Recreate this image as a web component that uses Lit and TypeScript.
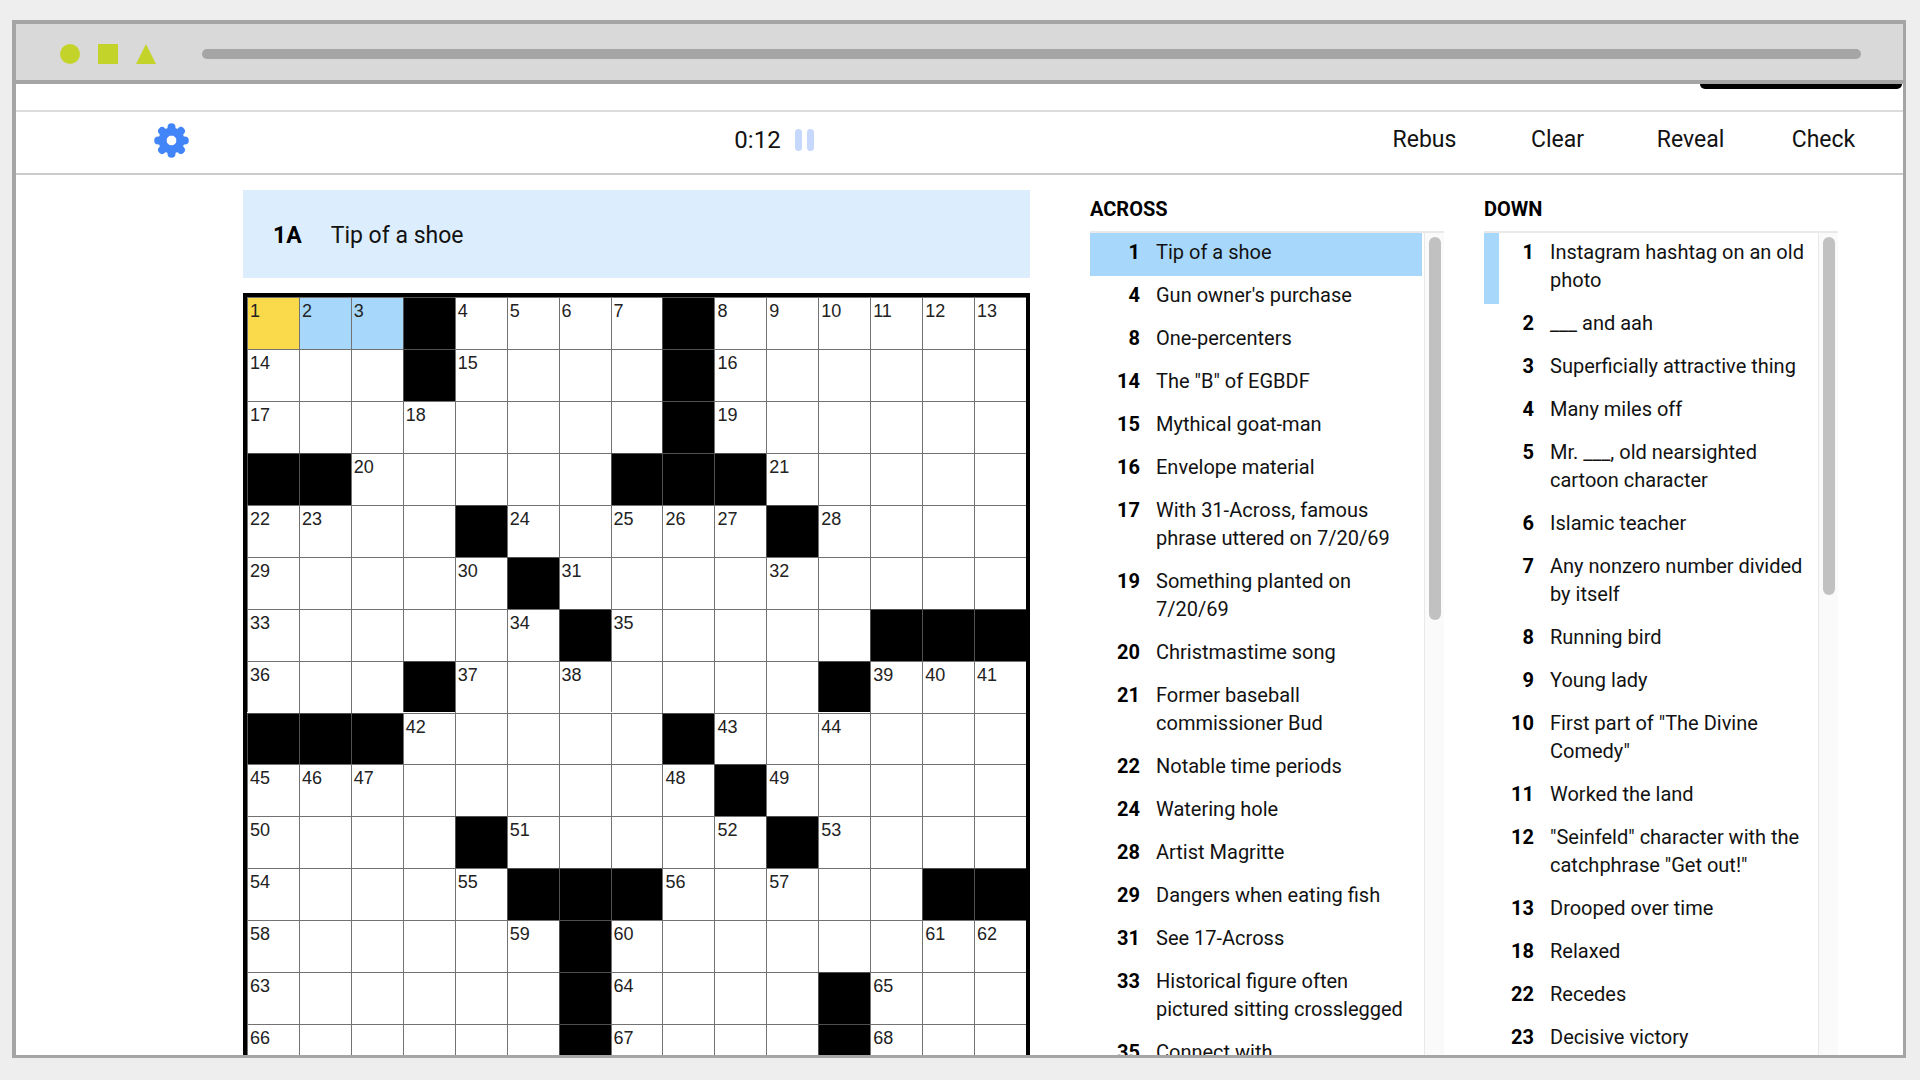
import { LitElement, html, css, svg } from "lit";
import { customElement, property } from "lit/decorators.js";
import { classMap } from "lit/directives/class-map.js";

interface Clue {
  n: number;
  text: string;
}

interface Cell {
  block: boolean;
  n: number;
  row: number;
  col: number;
}

const PATTERN = [
  "...#....#......",
  "...#....#......",
  "........#......",
  "##.....###.....",
  "....#.....#....",
  ".....#.........",
  "......#.....###",
  "...#.......#...",
  "###.....#......",
  ".........#.....",
  "....#.....#....",
  ".....###.....##",
  "......#........",
  "......#....#...",
  "......#....#...",
];

const ACROSS: Clue[] = [
  { n: 1, text: "Tip of a shoe" },
  { n: 4, text: "Gun owner's purchase" },
  { n: 8, text: "One-percenters" },
  { n: 14, text: 'The "B" of EGBDF' },
  { n: 15, text: "Mythical goat-man" },
  { n: 16, text: "Envelope material" },
  { n: 17, text: "With 31-Across, famous phrase uttered on 7/20/69" },
  { n: 19, text: "Something planted on 7/20/69" },
  { n: 20, text: "Christmastime song" },
  { n: 21, text: "Former baseball commissioner Bud" },
  { n: 22, text: "Notable time periods" },
  { n: 24, text: "Watering hole" },
  { n: 28, text: "Artist Magritte" },
  { n: 29, text: "Dangers when eating fish" },
  { n: 31, text: "See 17-Across" },
  { n: 33, text: "Historical figure often pictured sitting crosslegged" },
  { n: 35, text: "Connect with" },
];

const DOWN: Clue[] = [
  { n: 1, text: "Instagram hashtag on an old photo" },
  { n: 2, text: "___ and aah" },
  { n: 3, text: "Superficially attractive thing" },
  { n: 4, text: "Many miles off" },
  { n: 5, text: "Mr. ___, old nearsighted cartoon character" },
  { n: 6, text: "Islamic teacher" },
  { n: 7, text: "Any nonzero number divided by itself" },
  { n: 8, text: "Running bird" },
  { n: 9, text: "Young lady" },
  { n: 10, text: 'First part of "The Divine Comedy"' },
  { n: 11, text: "Worked the land" },
  { n: 12, text: '"Seinfeld" character with the catchphrase "Get out!"' },
  { n: 13, text: "Drooped over time" },
  { n: 18, text: "Relaxed" },
  { n: 22, text: "Recedes" },
  { n: 23, text: "Decisive victory" },
];

/** Numbers every cell that starts an across or a down word. */
function buildCells(pattern: string[]): Cell[] {
  const open = (r: number, c: number) => pattern[r]?.[c] === ".";
  let next = 1;
  return pattern.flatMap((line, row) =>
    [...line].map((ch, col) => {
      const block = ch === "#";
      const startsAcross = !open(row, col - 1) && open(row, col + 1);
      const startsDown = !open(row - 1, col) && open(row + 1, col);
      const n = !block && (startsAcross || startsDown) ? next++ : 0;
      return { block, n, row, col };
    })
  );
}

const CELLS = buildCells(PATTERN);

@customElement("clue-list")
export class ClueList extends LitElement {
  @property() heading = "";
  @property({ attribute: false }) clues: Clue[] = [];
  @property({ type: Number }) selected = 0;
  @property({ type: Number }) related = 0;
  @property({ type: Number }) thumb = 40;

  static styles = css`
    :host {
      display: flex;
      flex-direction: column;
      min-width: 0;
      min-height: 0;
      color: #121212;
    }
    .heading {
      margin: 0;
      padding: 20px 0 8px;
      font-size: 20px;
      line-height: 28px;
      font-weight: 700;
      color: #000;
    }
    .scroller {
      flex: 1;
      min-height: 0;
      display: flex;
      gap: 2px;
      border-top: 2px solid #e9e9e9;
      overflow: hidden;
    }
    .items {
      flex: 1;
      min-width: 0;
      margin: 0;
      padding: 0;
      list-style: none;
    }
    .item {
      display: flex;
      gap: 16px;
      padding: 5px 12px 10px 0;
      border-left: 15px solid transparent;
      font-size: 20px;
      line-height: 28px;
    }
    .selected {
      background: #a7d8fb;
    }
    .selected,
    .related {
      border-left-color: #a7d8fb;
    }
    .num {
      flex: none;
      width: 35px;
      text-align: right;
      font-weight: 700;
      color: #000;
    }
    .track {
      flex: none;
      width: 12px;
      padding: 4px 3px 4px 4px;
      border-left: 1px solid #e8e8e8;
      background: #fafafa;
    }
    .thumb {
      border-radius: 6px;
      background: #c1c1c1;
    }
  `;

  render() {
    return html`
      <h2 class="heading">${this.heading}</h2>
      <div class="scroller">
        <ol class="items">
          ${this.clues.map(
            (c) => html`<li
              class=${classMap({
                item: true,
                selected: c.n === this.selected,
                related: c.n === this.related,
              })}
            >
              <span class="num">${c.n}</span><span>${c.text}</span>
            </li>`
          )}
        </ol>
        <div class="track">
          <div class="thumb" style="height:${this.thumb}%"></div>
        </div>
      </div>
    `;
  }
}

@customElement("puzzle-grid")
export class PuzzleGrid extends LitElement {
  static styles = css`
    :host {
      display: block;
    }
    .grid {
      display: grid;
      grid-template-columns: repeat(15, 1fr);
      border: 4px solid #000;
      background: #fff;
    }
    .cell {
      display: grid;
      aspect-ratio: 1;
      box-sizing: border-box;
      min-width: 0;
      border: 0 solid #727272;
      border-width: 1px 0 0 1px;
      background: #fff;
    }
    .block {
      background: #000;
      border-color: #505050;
    }
    .word {
      background: #a7d8fb;
    }
    .active {
      background: #fada4a;
    }
    .num,
    .letter {
      grid-area: 1 / 1;
    }
    .num {
      padding: 4px 0 0 2px;
      font: 18px/19px "Liberation Sans", Arial, sans-serif;
      color: #222;
    }
    .letter {
      box-sizing: border-box;
      width: 100%;
      min-width: 0;
      height: 100%;
      margin: 0;
      padding: 12px 0 0;
      border: 0;
      outline: 0;
      background: transparent;
      font: 32px "Liberation Sans", Arial, sans-serif;
      text-align: center;
      text-transform: uppercase;
    }
  `;

  render() {
    return html`<div class="grid">
      ${CELLS.map((c) => {
        if (c.block) {
          return html`<div class="cell block"></div>`;
        }
        const active = c.row === 0 && c.col === 0;
        const word = c.row === 0 && (c.col === 1 || c.col === 2);
        return html`<label class=${classMap({ cell: true, active, word })}>
          <span class="num">${c.n || ""}</span>
          <input
            class="letter"
            maxlength="1"
            autocomplete="off"
            aria-label="Row ${c.row + 1}, column ${c.col + 1}"
          />
        </label>`;
      })}
    </div>`;
  }
}

@customElement("app-root")
export class AppRoot extends LitElement {
  static styles = css`
    :host {
      display: block;
      box-sizing: border-box;
      height: 100vh;
      padding: 20px 14px 22px 12px;
      background: #eee;
      font-family: Roboto, "Liberation Sans", sans-serif;
      color: #121212;
    }
    .window {
      display: flex;
      flex-direction: column;
      box-sizing: border-box;
      height: 100%;
      border: solid #a5a5a5;
      border-width: 4px 3px 3px 4px;
      background: #fff;
      overflow: hidden;
    }
    .titlebar {
      flex: none;
      display: flex;
      align-items: center;
      gap: 46px;
      height: 56px;
      padding: 3px 42px 0 44px;
      box-sizing: border-box;
      background: #d9d9d9;
    }
    .shapes {
      flex: none;
      width: 96px;
      height: 20px;
      fill: #c4d32a;
    }
    .address {
      flex: 1;
      height: 10px;
      border-radius: 5px;
      background: #a5a5a5;
    }
    .banner {
      flex: none;
      display: flex;
      justify-content: flex-end;
      height: 26px;
      padding-right: 1px;
      border-top: 4px solid #a5a5a5;
      border-bottom: 2px solid #dcdcdc;
    }
    .tab {
      width: 202px;
      height: 5px;
      border-radius: 0 0 5px 5px;
      background: #000;
    }
    .toolbar {
      flex: none;
      display: grid;
      grid-template-columns: 138fr 1204fr 532fr 13fr;
      align-items: center;
      box-sizing: border-box;
      height: 63px;
      padding-bottom: 4px;
      border-bottom: 2px solid #cbcbcb;
    }
    button {
      margin: 0;
      padding: 0;
      border: 0;
      background: none;
      color: inherit;
      font: inherit;
      cursor: pointer;
    }
    .gear {
      grid-column: 2;
      grid-row: 1;
      justify-self: start;
      display: flex;
    }
    .gear svg {
      width: 35px;
      height: 35px;
      fill: #4285f9;
      stroke: #4285f9;
    }
    .timer {
      grid-column: 1 / 3;
      grid-row: 1;
      justify-self: center;
      display: flex;
      align-items: center;
      gap: 14px;
      padding: 0 0 2px 174px;
      font-size: 24px;
      line-height: 28px;
    }
    .pause {
      display: flex;
      gap: 5px;
    }
    .pause i {
      width: 7px;
      height: 22px;
      border-radius: 4px;
      background: #c6d9fd;
    }
    .actions {
      grid-column: 3;
      grid-row: 1;
      display: grid;
      grid-template-columns: repeat(4, 1fr);
      padding-bottom: 2px;
      font-size: 23px;
      line-height: 28px;
    }
    .play {
      flex: 1;
      min-height: 0;
      display: grid;
      grid-template-columns: 227fr 787fr 60fr 354fr 40fr 354fr 65fr;
      grid-template-rows: minmax(0, 1fr);
    }
    .board {
      grid-column: 2;
      padding-top: 15px;
    }
    .across {
      grid-column: 4;
    }
    .down {
      grid-column: 6;
    }
    .current {
      display: flex;
      align-items: center;
      gap: 29px;
      box-sizing: border-box;
      height: 88px;
      margin-bottom: 15px;
      padding: 3px 30px 0;
      background: #dceefd;
      font-size: 23px;
      line-height: 28px;
    }
    .current b {
      color: #000;
    }
  `;

  private gear() {
    const spokes = [0, 45, 90, 135].map(
      (a) =>
        svg`<path d="M0 -13.3V-9M0 9V13.3" transform="rotate(${a})" stroke-width="8" stroke-linecap="round" />`
    );
    return html`<svg viewBox="-17.5 -17.5 35 35" aria-hidden="true">
      <circle r="9" fill="none" stroke-width="8" />
      ${spokes}
    </svg>`;
  }

  render() {
    return html`
      <div class="window">
        <div class="titlebar">
          <svg class="shapes" viewBox="0 0 96 20" aria-hidden="true">
            <circle cx="10" cy="10" r="10" />
            <rect x="38" width="20" height="20" />
            <path d="M86 0L96 20H76Z" />
          </svg>
          <div class="address"></div>
        </div>
        <div class="banner"><div class="tab"></div></div>
        <nav class="toolbar">
          <button class="gear" aria-label="Settings">${this.gear()}</button>
          <div class="timer">
            <span>0:12</span>
            <button class="pause" aria-label="Pause"><i></i><i></i></button>
          </div>
          <div class="actions">
            ${["Rebus", "Clear", "Reveal", "Check"].map((t) => html`<button>${t}</button>`)}
          </div>
        </nav>
        <main class="play">
          <section class="board">
            <div class="current"><b>1A</b><span>Tip of a shoe</span></div>
            <puzzle-grid></puzzle-grid>
          </section>
          <clue-list class="across" heading="ACROSS" .clues=${ACROSS} .selected=${1} .thumb=${47}></clue-list>
          <clue-list class="down" heading="DOWN" .clues=${DOWN} .related=${1} .thumb=${44}></clue-list>
        </main>
      </div>
    `;
  }
}
